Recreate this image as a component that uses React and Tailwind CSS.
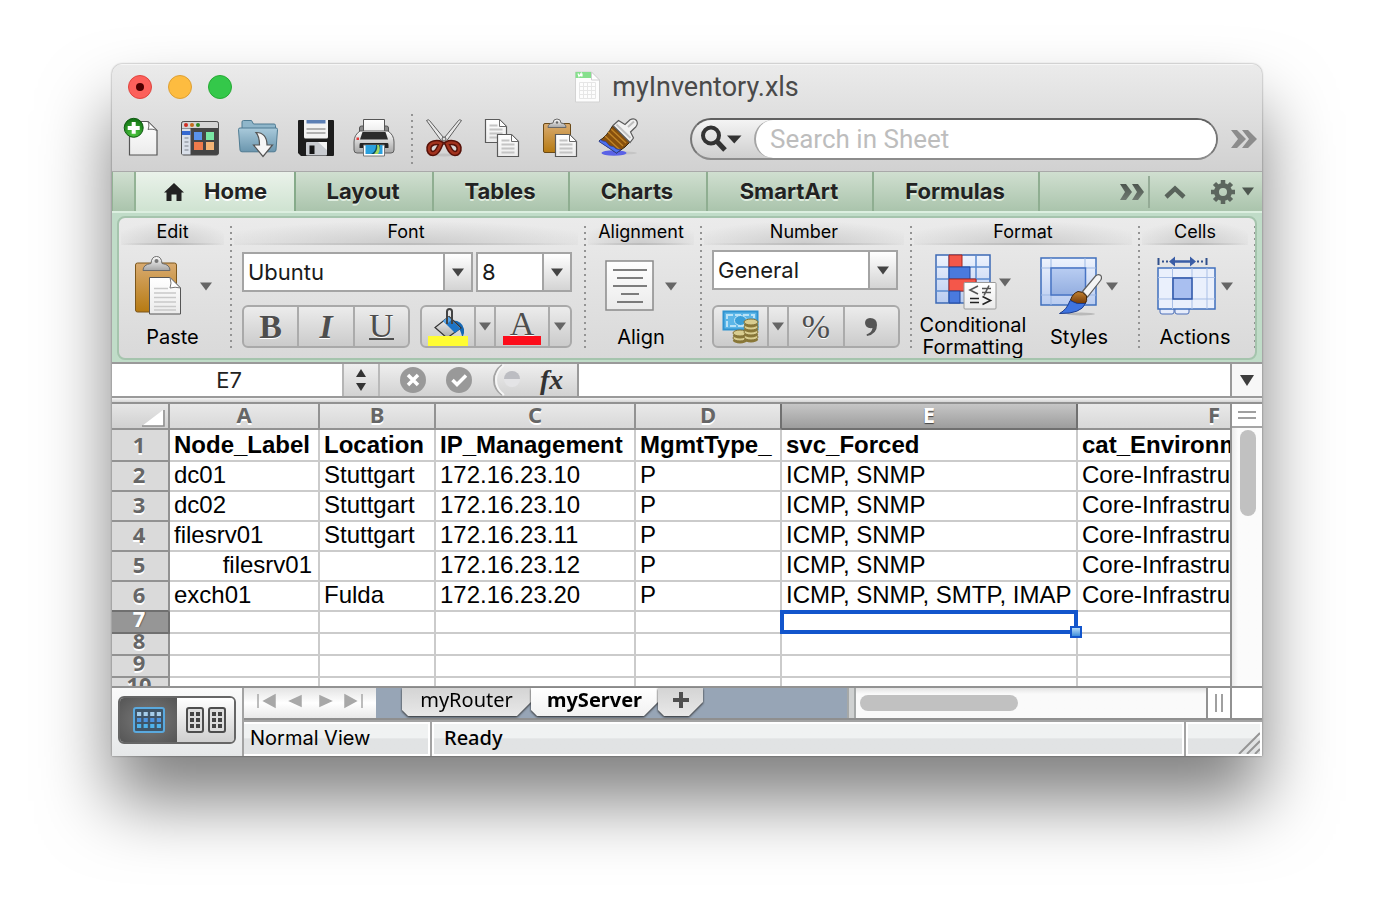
import React from "react";

/* ---------- small shared pieces ---------- */

function Caret({ className = "text-[#666]" }) {
  return (
    <svg width="12" height="9" viewBox="0 0 12 9" className={"shrink-0 " + className} aria-hidden="true">
      <path d="M0 .5h12L6 8.5z" fill="currentColor" />
    </svg>
  );
}

function Dots({ className = "" }) {
  return (
    <div
      className={
        "w-[2px] shrink-0 bg-[repeating-linear-gradient(to_bottom,#949494_0_2px,transparent_2px_6px)] " + className
      }
    />
  );
}

/* A sheet of paper with a folded corner and text lines */
function Sheet({ x, y, w, h, fold = 7, lines = 4, step = 4, top = 9 }) {
  return (
    <g>
      <path
        d={`M${x} ${y}h${w - fold}l${fold} ${fold}v${h - fold}h${-w}z`}
        fill="url(#paper)"
        stroke="#5a5a5a"
        strokeWidth="1.2"
      />
      <path d={`M${x + w - fold} ${y}v${fold}h${fold}z`} fill="#fff" stroke="#6b6b6b" strokeWidth="1" />
      {Array.from({ length: lines }, (_, i) => (
        <path
          key={i}
          d={`M${x + 4} ${y + top + i * step}h${i === 0 && top < fold + 3 ? w - fold - 6 : w - 8}`}
          stroke="#c4c4c4"
          strokeWidth="1.8"
        />
      ))}
    </g>
  );
}

function SharedGradients() {
  return (
    <svg width="0" height="0" className="absolute" aria-hidden="true">
      <defs>
        <linearGradient id="paper" x1="0" y1="0" x2="0" y2="1">
          <stop offset="0" stopColor="#fff" />
          <stop offset="1" stopColor="#ebebeb" />
        </linearGradient>
        <linearGradient id="board" x1="0" y1="0" x2="0" y2="1">
          <stop offset="0" stopColor="#d9ab70" />
          <stop offset="1" stopColor="#b67a12" />
        </linearGradient>
        <linearGradient id="metal" x1="0" y1="0" x2="0" y2="1">
          <stop offset="0" stopColor="#fdfdfd" />
          <stop offset="1" stopColor="#a5a5a5" />
        </linearGradient>
        <linearGradient id="folder" x1="0" y1="0" x2="0" y2="1">
          <stop offset="0" stopColor="#a9cadb" />
          <stop offset="1" stopColor="#6b96ae" />
        </linearGradient>
        <linearGradient id="blueGrid" x1="0" y1="0" x2="0" y2="1">
          <stop offset="0" stopColor="#eef3fd" />
          <stop offset="1" stopColor="#b9ccf0" />
        </linearGradient>
        <linearGradient id="blueCell" x1="0" y1="0" x2="0" y2="1">
          <stop offset="0" stopColor="#b9cdf2" />
          <stop offset="1" stopColor="#93aee0" />
        </linearGradient>
        <linearGradient id="bristle" x1="0" y1="0" x2="0" y2="1">
          <stop offset="0" stopColor="#c4822f" />
          <stop offset="1" stopColor="#6f3606" />
        </linearGradient>
        <radialGradient id="green" cx=".5" cy=".8" r=".8">
          <stop offset="0" stopColor="#4ec940" />
          <stop offset="1" stopColor="#0f6d12" />
        </radialGradient>
        <linearGradient id="glyph" x1="0" y1="0" x2="0" y2="1">
          <stop offset="0" stopColor="#4d564f" />
          <stop offset="1" stopColor="#707b72" />
        </linearGradient>
      </defs>
    </svg>
  );
}

/* ---------- toolbar icons (44 x 44) ---------- */

function NewIcon() {
  return (
    <>
      <path d="M9.5 4.5H28l9 9V38H9.5z" fill="url(#paper)" stroke="#555" strokeWidth="1.2" />
      <path d="M28 4.5c1.5 3 .8 6.500 0 8 2-.6 6-.5 9 1z" fill="#fff" stroke="#666" strokeWidth="1" />
      <circle cx="13.700" cy="10.800" r="9.500" fill="url(#green)" stroke="#0d5a10" />
      <path d="M11.700 5h4v3.900h4v4h-4v3.900h-4v-3.900h-4v-4h4z" fill="#fff" />
    </>
  );
}

function GalleryIcon() {
  return (
    <>
      <rect x="3.500" y="4.500" width="37" height="33.500" rx="2" fill="#454545" stroke="#4d4d4d" />
      <path d="M4 11V6.500Q4 5 5.500 5h33Q40 5 40 6.500V11z" fill="#d4d4d4" />
      <circle cx="8" cy="8" r="2" fill="#d02c22" />
      <circle cx="14" cy="8" r="2" fill="#c56b1b" />
      <circle cx="20" cy="8" r="2" fill="#2e8a24" />
      <path d="M4 11.500h8.500V37.500H4z" fill="#d9dfe9" />
      <path d="M4 14h8.500v4H4z" fill="#3468d0" />
      <path d="M6.500 21h4M6.500 25h4M6.500 29h4M6.500 33h4" stroke="#9aa1ab" strokeWidth="1.500" />
      <rect x="16" y="15" width="8" height="8" fill="#5b93ea" />
      <rect x="28" y="15" width="8" height="8" fill="#79e6a4" />
      <rect x="16" y="25" width="9" height="8" fill="#ee7a4b" />
      <rect x="28" y="25" width="8" height="8" fill="#f3b476" />
    </>
  );
}

function FolderIcon() {
  return (
    <>
      <path d="M6 14V5q0-1.500 1.500-1.500h8L17.500 7H38q1.500 0 1.500 1.500V14z" fill="#8fb6ca" stroke="#4f7b92" />
      <path d="M2.500 12.500q0-1.500 1.500-1.500h36q1.500 0 1.500 1.500L40 33q-.2 1.800-2 1.800H6q-1.800 0-2-1.800z" fill="url(#folder)" stroke="#4f7b92" />
      <path d="M20 15.500c7-.2 11 4.500 11 12.500h5.500L27 39.500 17.500 28h6c0-5.500-.8-9.500-3.500-12.500z" fill="#f5f5f5" stroke="#555" strokeWidth="1.200" />
    </>
  );
}

function SaveIcon() {
  return (
    <>
      <path d="M5 3h34q1 0 1 1v34q0 1-1 1H7l-3-3V4q0-1 1-1z" fill="#1d1d1d" />
      <path d="M10 3h24v17q0 1.500-1.500 1.500h-21Q10 21.500 10 20z" fill="#f2f2f2" />
      <path d="M12.500 3h19v3.500h-19z" fill="#5c7fb4" />
      <path d="M12.500 12h19M12.500 16h19" stroke="#9a9a9a" strokeWidth="1.500" />
      <rect x="12" y="25" width="21" height="13.500" rx="1" fill="#c9ccd1" />
      <path d="M24 25h9v8z" fill="#f3f3f3" />
      <rect x="15.500" y="28.500" width="5" height="8.500" fill="#161616" />
    </>
  );
}

function PrintIcon() {
  return (
    <>
      <rect x="7.500" y="9" width="29" height="12" rx="2" fill="#8b8b8b" stroke="#555" />
      <path d="M11.500 2.500h21V16h-21z" fill="url(#paper)" stroke="#555" />
      <path d="M8 14h28q6 4 6 11v8q0 3-3 3H5q-3 0-3-3v-8q0-7 6-11z" fill="url(#metal)" stroke="#5e5e5e" />
      <path d="M10.500 15h23l2.500 7.500H8z" fill="#2c2c2c" />
      <path d="M8.500 26h27q1 0 1 2v3h-29v-3q0-2 1-2z" fill="#242424" />
      <rect x="4.500" y="20.500" width="2.500" height="2.500" fill="#e23b3b" />
      <path d="M11.500 28h21v11h-21z" fill="#fff" stroke="#777" />
      <path d="M13.500 28h17v9h-17z" fill="#2ba0dd" />
      <path d="M19 37c4-2 5-5 5-9h4c0 5-2 8-5 9z" fill="#0b5064" />
      <path d="M25 28c1 4-1 7-3 9h4c2-3 2-6 1-9z" fill="#a4d65e" />
    </>
  );
}

function CutIcon() {
  return (
    <>
      <ellipse cx="22" cy="38" rx="15" ry="1.500" fill="#c2c2c2" />
      <path d="M4.500 3.500q2-1.500 3 0L26 26l-4 1.500z" fill="#e8e8e8" stroke="#5d5d5d" />
      <path d="M39.500 3.500q-2-1.500-3 0L18 26l4 1.500z" fill="#e8e8e8" stroke="#5d5d5d" />
      <circle cx="22" cy="22" r="2" fill="#ddd" stroke="#555" />
      <g fill="none" stroke="#561108" strokeWidth="5.500">
        <path d="M19 26.500c-4-2-11-1-12 4-.5 4 1.500 6 4 6 4-.2 6-5 8-10z" />
        <path d="M25 26.500c4-2 11-1 12 4 .5 4-1.500 6-4 6-4-.2-6-5-8-10z" />
      </g>
      <g fill="none" stroke="#a2331e" strokeWidth="2.500">
        <path d="M19 26.500c-4-2-11-1-12 4-.5 4 1.500 6 4 6 4-.2 6-5 8-10z" />
        <path d="M25 26.500c4-2 11-1 12 4 .5 4-1.500 6-4 6-4-.2-6-5-8-10z" />
      </g>
    </>
  );
}

function CopyIcon() {
  return (
    <>
      <Sheet x={5.5} y={2.500} w={21} h={23} top={6} lines={4} />
      <Sheet x={17.500} y={17.500} w={21} h={22} top={6} lines={4} />
    </>
  );
}

function PasteIcon() {
  return (
    <>
      <rect x="5.500" y="6.500" width="27" height="29" rx="1.500" fill="url(#board)" stroke="#6b4a17" />
      <path d="M10 10.500q0-4 5-4.500 0-4 4-4t4 4q5 .5 5 4.500z" fill="url(#metal)" stroke="#6a6a6a" />
      <circle cx="19" cy="5.500" r="1.200" fill="#666" />
      <Sheet x={17.500} y={17.500} w={21} h={22} top={6} lines={4} />
    </>
  );
}

function BrushIcon() {
  return (
    <>
      <ellipse cx="30" cy="36" rx="11" ry="1.500" fill="#bdbdbd" opacity=".7" />
      <ellipse cx="18" cy="36" rx="12.500" ry="2.800" fill="#5a62e6" />
      <path d="M16.500 9 34 25l-5 5-8.500 6L3 24q8-5 13.500-15z" fill="#87500e" stroke="#33240e" />
      <path d="M12 15l15 14M9 19l15 14M15 12l15 14" stroke="#c08426" strokeWidth="1.400" />
      <path d="M4.500 22.500c3 3 4 0 7 4s5 2 7 4 4 2 6.500 2L20.500 36 3 24.500z" fill="#4d70ee" stroke="#2c3f94" strokeWidth=".8" />
      <path
        d="M17 8.500 22.500 3.500 29 7.500 34 2.800q4-2.300 6.500.7 2 3.500-.8 6.500L34.500 15l3 6-3.500 4.500z"
        fill="#f1f1f1"
        stroke="#5c5c5c"
        strokeWidth="1.200"
      />
      <path d="M20.500 7.500 34.500 21" stroke="#c3c3c3" strokeWidth="2" />
      <path d="M32 10l6-5.500" stroke="#bdbdbd" strokeWidth="2" />
    </>
  );
}

const fileTools = [
  ["New workbook", NewIcon],
  ["Template gallery", GalleryIcon],
  ["Open", FolderIcon],
  ["Save", SaveIcon],
  ["Print", PrintIcon],
];
const editTools = [
  ["Cut", CutIcon],
  ["Copy", CopyIcon],
  ["Paste", PasteIcon],
  ["Format painter", BrushIcon],
];

function ToolButton({ label, Icon }) {
  return (
    <button type="button" aria-label={label} className="flex w-[58px] shrink-0 justify-center">
      <svg width="44" height="44" viewBox="0 0 44 44" aria-hidden="true">
        <Icon />
      </svg>
    </button>
  );
}

/* ---------- window chrome ---------- */

function TitleBar() {
  return (
    <div className="flex h-11 items-center px-4">
      <div className="flex flex-1 gap-4">
        <button type="button" aria-label="Close" className="flex size-6 items-center justify-center rounded-full border border-[#e0443e] bg-[#fc605b]">
          <span className="size-2 rounded-full bg-[#4d0000]" />
        </button>
        <button type="button" aria-label="Minimize" className="size-6 rounded-full border border-[#dea034] bg-[#fdbc40]" />
        <button type="button" aria-label="Zoom" className="size-6 rounded-full border border-[#27aa35] bg-[#34c84a]" />
      </div>
      <div className="flex items-center gap-3">
        <svg width="25" height="32" viewBox="0 0 25 32" aria-hidden="true">
          <path d="M.5 1h16l8 8v22H.5z" fill="#fdfdfd" stroke="#d3d3d3" />
          <path d="M.5 1h16l4 6H.5z" fill="#86e08d" />
          <path d="M16.500 1v8h8z" fill="#fff" stroke="#cfcfcf" />
          <path d="M3 2.500l1 3 2-3v3M7 2.500v3" stroke="#fff" strokeWidth="1.200" fill="none" />
          <path d="M4.500 11.500h16v16h-16zM4.500 15.500h16M4.500 19.500h16M4.500 23.500h16M8.500 11.500v16M12.500 11.500v16M16.500 11.500v16" stroke="#e6e6e6" fill="none" />
        </svg>
        <h1 className="font-['Roboto',sans-serif] text-[27px] leading-8 text-[#4a4a4a]">myInventory.xls</h1>
      </div>
      <div className="flex-1" />
    </div>
  );
}

function Toolbar() {
  return (
    <div className="flex h-[62px] items-center pr-1 pb-[2px] pl-px">
      {fileTools.map(([label, Icon]) => (
        <ToolButton key={label} label={label} Icon={Icon} />
      ))}
      <div className="flex w-3 shrink-0 justify-end pr-0.5">
        <Dots className="h-[50px]" />
      </div>
      {editTools.map(([label, Icon]) => (
        <ToolButton key={label} label={label} Icon={Icon} />
      ))}
      <label className="ml-[43px] flex h-[42px] min-w-0 flex-1 items-center rounded-full border-2 border-t-[#606060] border-r-[#777] border-b-[#8c8c8c] border-l-[#777] bg-linear-to-b from-[#f4f4f4] to-[#cfcfcf] pl-2">
        <svg width="44" height="30" viewBox="0 0 44 30" className="mr-2.5 shrink-0" aria-hidden="true">
          <circle cx="11" cy="11.500" r="8" fill="none" stroke="#333" strokeWidth="4" />
          <path d="M17 17.500l8 8.500" stroke="#333" strokeWidth="5" />
          <path d="M27 11.500h14.500l-7.250 8z" fill="#333" />
        </svg>
        <span className="sr-only">Search in Sheet</span>
        <input
          type="search"
          placeholder="Search in Sheet"
          className="h-full w-full min-w-0 rounded-full border-l-2 border-[#a5a5a5] bg-white pl-3.5 font-['Roboto',sans-serif] text-[26px] placeholder:text-[#bdbdbd] focus:outline-none"
        />
      </label>
      <button type="button" aria-label="More tools" className="ml-3 flex w-7 shrink-0 justify-center text-[#8c8c8c]">
        <svg width="26" height="18" viewBox="0 0 26 18" aria-hidden="true">
          <path d="M0 0h6l9 9-9 9H0l7-9zM11 0h6l9 9-9 9h-6l7-9z" fill="currentColor" />
        </svg>
      </button>
    </div>
  );
}

const tabs = [
  ["Layout", "w-[138px]"],
  ["Tables", "w-[136px]"],
  ["Charts", "w-[138px]"],
  ["SmartArt", "w-[166px]"],
  ["Formulas", "w-[166px]"],
];

function RibbonTabs() {
  return (
    <div className="flex h-10 border-t border-[#a9a9a9] bg-linear-to-b from-[#d0dfd0] to-[#aac4ac] text-[22px] font-bold text-[#222]">
      <div className="w-6 shrink-0 border-r-2 border-l border-[#93b395]" />
      <button type="button" className="flex w-[160px] shrink-0 items-center border-r-2 border-[#86ab8a] bg-linear-to-b from-[#eaf2ea] to-[#cfe3d1] pl-7 [text-shadow:0_2px_0_#fff]">
        <svg width="20" height="18" viewBox="0 0 20 18" className="mr-5" aria-hidden="true">
          <path d="M10 0l10 9.500h-2.500V18h-5v-6.500h-5V18h-5V9.500H0z" fill="#222" />
        </svg>
        Home
      </button>
      {tabs.map(([name, width]) => (
        <button key={name} type="button" className={width + " shrink-0 border-r-2 border-[#8fae91] pr-0.5 [text-shadow:0_2px_0_#e0eee0]"}>
          {name}
        </button>
      ))}
      <div className="flex flex-1 items-center justify-end gap-1 pr-2">
        <button type="button" aria-label="More tabs">
          <svg width="24" height="18" viewBox="0 0 24 18" aria-hidden="true">
            <path d="M0 1h6l6 8-6 8H0l5-8zM12 1h6l6 8-6 8h-6l5-8z" fill="url(#glyph)" />
          </svg>
        </button>
        <div className="h-8 w-[2px] bg-[#94ab96]" />
        <button type="button" aria-label="Collapse ribbon" className="mr-5 ml-2.5">
          <svg width="22" height="16" viewBox="0 0 22 16" aria-hidden="true">
            <path d="M2 13l9-8.500 9 8.500" fill="none" stroke="#59635b" strokeWidth="4.500" />
          </svg>
        </button>
        <button type="button" aria-label="Ribbon settings" className="flex items-center gap-1.5">
          <svg width="26" height="26" viewBox="-13 -13 26 26" aria-hidden="true">
            <circle r="6.500" fill="none" stroke="#5c665e" strokeWidth="5" />
            <g stroke="#5c665e" strokeWidth="4.500">
              <path d="M0-12V-8M0 12V8M-12 0h4M12 0H8M-8.500-8.500l3 3M8.500 8.500l-3-3M-8.500 8.500l3-3M8.500-8.500l-3 3" />
            </g>
          </svg>
          <Caret className="text-[#4d564f]" />
        </button>
      </div>
    </div>
  );
}

/* ---------- ribbon ---------- */

function Group({ title, width, children }) {
  return (
    <>
      <section className={width + " flex shrink-0 flex-col pr-1.5 pl-0.5"}>
        <div className="bg-[radial-gradient(ellipse_60%_90%_at_50%_100%,#cbcbcb,transparent)]">
          <h2 className="h-[25px] text-center text-[18px] leading-[27px] text-black">{title}</h2>
          <div className="h-[2px] bg-linear-to-r from-transparent via-[#bdbdbd] to-transparent" />
        </div>
        {children}
      </section>
      <Dots className="my-2" />
    </>
  );
}

function BigButton({ label, gap, tall, children, className = "" }) {
  return (
    <button type="button" className={"flex flex-col items-center pt-2 text-[20px] text-black " + className}>
      <span className={(tall ? "h-[61px] " : "h-[72px] ") + "flex items-start"}>
        <span className={gap + (tall ? " h-[58px]" : " h-[66px]") + " flex items-center"}>
          {children}
          <Caret />
        </span>
      </span>
      <span className={tall ? "leading-[22px]" : "leading-6"}>{label}</span>
    </button>
  );
}

function Combo({ label, options, width }) {
  return (
    <label className={width + " relative h-10 shrink-0"}>
      <span className="sr-only">{label}</span>
      <select className="h-full w-full appearance-none border-2 border-[#a4a4a4] bg-white pl-1 text-[22px] leading-8 text-[#1a1a1a]">
        {options.map((o) => (
          <option key={o}>{o}</option>
        ))}
      </select>
      <span className="pointer-events-none absolute inset-y-0 right-0 flex w-[30px] items-center justify-center border-2 border-[#a4a4a4] bg-linear-to-b from-white to-[#d4d4d4]">
        <Caret className="text-[#444]" />
      </span>
    </label>
  );
}

const segBox =
  "flex h-[43px] shrink-0 overflow-hidden rounded-[6px] border-2 border-[#a9a9a9] bg-linear-to-b from-[#ececec] to-[#cbcbcb] divide-x-2 divide-[#ababab] font-['Liberation_Serif',serif] text-[34px] leading-none text-[#4e4e4e]";
const seg = "flex flex-1 items-center justify-center [text-shadow:0_1px_0_#fff]";
const segCaret = "flex w-5 shrink-0 items-center justify-center";

function ClipboardArt() {
  return (
    <svg width="50" height="62" viewBox="0 0 50 62" aria-hidden="true">
      <rect x="1.500" y="8" width="41" height="49" rx="2" fill="url(#board)" stroke="#7c571c" />
      <path d="M9 15.500q0-6 8-7 .5-7 5.500-7t5.500 7q8 1 8 7z" fill="url(#metal)" stroke="#6a6a6a" />
      <circle cx="22.500" cy="6" r="2" fill="#777" />
      <path d="M15.500 22.500H36l10.500 10.500v26h-31z" fill="url(#paper)" stroke="#555" />
      <path d="M36 22.500q2 6 0 10.500 5-1.500 10.500 0z" fill="#fff" stroke="#777" />
      <path d="M20 33.500h14M20 38h22M20 42.500h22M20 47h22M20 51.500h22M20 55h22" stroke="#c9c9c9" strokeWidth="1.600" />
    </svg>
  );
}

function BucketArt() {
  return (
    <svg width="40" height="38" viewBox="0 0 40 38" aria-hidden="true">
      <path d="M25 12.500q9 0 11 8.500.8 4-1.500 8.500-1.500-5-3-8.500T25 15z" fill="#1668b4" />
      <path d="M21 8.500 33 20 19 30 7 19.500z" fill="url(#metal)" stroke="#333" strokeWidth="1.200" />
      <path d="M15 13 27 25l5.500-4.500L20.500 9z" fill="#1d74c6" />
      <path d="M15 13l5.500-4.200 3 3-5 4.700z" fill="#58a6ea" />
      <path d="M19 16V3.500q0-2.500 2.500-2.500T24 3.500V16" fill="none" stroke="#444" strokeWidth="2" />
      <path d="M0 28h40v10H0z" fill="#fffc33" />
    </svg>
  );
}

function MoneyArt() {
  const coins = [
    [29, 12], [29, 17], [29, 22], [29, 27], [18, 23], [18, 28],
  ].reverse();
  return (
    <svg width="38" height="34" viewBox="0 0 38 34" aria-hidden="true">
      <rect x="1.500" y="1.500" width="34" height="18" fill="#5cb6e8" stroke="#2f93d0" strokeWidth="2" />
      <rect x="5" y="5" width="27" height="11" fill="none" stroke="#b9e2f7" strokeDasharray="6 2" strokeWidth="2" />
      <ellipse cx="18.500" cy="10.500" rx="6" ry="5" fill="#3b9fd8" stroke="#c8e9f9" />
      {coins.map(([x, y]) => (
        <g key={x + "-" + y}>
          <ellipse cx={x} cy={y + 2.500} rx="7" ry="3" fill="#8a7838" />
          <ellipse cx={x} cy={y} rx="7" ry="3" fill="#d9cd90" stroke="#84733a" />
        </g>
      ))}
    </svg>
  );
}

function AlignArt() {
  return (
    <svg width="50" height="52" viewBox="0 0 50 52" aria-hidden="true">
      <rect x="1" y="1" width="47" height="49" fill="url(#paper)" stroke="#8a8a8a" strokeWidth="1.500" />
      <path d="M8 10h34M12 18h26M8 26h34M16 34h18M12 42h26" stroke="#555" strokeWidth="1.600" />
    </svg>
  );
}

function ConditionalArt() {
  return (
    <svg width="62" height="56" viewBox="0 0 62 56" aria-hidden="true">
      <rect x="1" y="1" width="54" height="48" fill="url(#blueGrid)" stroke="#3d69b5" strokeWidth="1.500" />
      <path d="M1 13h54M1 25h54M1 37h54M14 1v48M41 1v48" stroke="#5b8ad0" strokeWidth="1.500" />
      <path d="M14 1h13v12H14z" fill="#f4574a" stroke="#a8281e" />
      <path d="M14 13h21v12H14z" fill="#4a7ade" stroke="#1f479e" />
      <path d="M14 25h27v12H14z" fill="#f4574a" stroke="#a8281e" />
      <path d="M14 37h11v12H14z" fill="#4a7ade" stroke="#1f479e" />
      <rect x="29" y="28.500" width="32" height="26.500" rx="1" fill="url(#paper)" stroke="#9a9a9a" />
      <g fill="none" stroke="#222" strokeWidth="1.600">
        <path d="M43 32l-8 4 8 4M47 34.500h9M47 38.500h9M54 31.500l-5 10" stroke="#555" />
        <path d="M35 44.500h9M35 48.500h9M47.500 42.500l8 4-8 4" />
      </g>
    </svg>
  );
}

function StylesArt() {
  return (
    <svg width="62" height="60" viewBox="0 0 62 60" aria-hidden="true">
      <rect x="1" y="2" width="55" height="47" fill="url(#blueGrid)" stroke="#3f6fbd" strokeWidth="1.500" />
      <path d="M1 12h55M1 39h55M11 2v47M45 2v47" stroke="#9db8e4" />
      <rect x="11" y="12" width="34.500" height="27" fill="url(#blueCell)" stroke="#4874c4" strokeWidth="1.500" />
      <ellipse cx="41" cy="58" rx="14" ry="1.500" fill="#b9b9b9" />
      <path d="M42.500 35.500 55.500 20q2.500-2.500 5-.8 2 2.300 0 5.300L47.500 41z" fill="#f4f4f4" stroke="#5e5e5e" strokeWidth="1.200" />
      <path d="M42.500 35.500l5 5.500-2 2-5.500-6z" fill="#9c9c9c" />
      <path d="M30.500 44q2-6.500 7.500-8.500 5-.5 8.500 4.500 1 5-1.500 8-8 1.500-14.500-4z" fill="url(#bristle)" stroke="#40240a" />
      <path d="M30 44.500q7 4.500 15.500 3-4.500 10.500-26 10 7.500-4 10.500-13z" fill="#3f74e0" stroke="#1c3c8c" />
    </svg>
  );
}

function ActionsArt() {
  return (
    <svg width="60" height="60" viewBox="0 0 60 60" aria-hidden="true">
      <path d="M1.500 2v7M49.500 2v7" stroke="#31508c" strokeWidth="2" />
      <path d="M5 5.500h8M40 5.500h7" stroke="#31508c" strokeWidth="2" strokeDasharray="2 2" />
      <path d="M12 5.500l6-5v3.800h15V.5l6 5-6 5V6.700H18v3.800z" fill="#3a5da6" />
      <path d="M3 52.500h14v3.500q0 2-2 2H5q-2 0-2-2zM18 52.500h14v3.500q0 2-2 2H20q-2 0-2-2z" fill="#e6ecfb" stroke="#4c6fb8" />
      <rect x="1" y="12" width="57" height="41" fill="#eaf0fc" stroke="#3f6fbd" strokeWidth="1.500" />
      <path d="M1 21.500h57M1 43h57M15.500 12v41M35 12v41M50 12v41" stroke="#a9bfe6" />
      <rect x="16" y="22" width="19" height="21" fill="#a9bff0" stroke="#2d55a8" strokeWidth="1.500" />
    </svg>
  );
}

function Ribbon() {
  return (
    <div className="border-t-2 border-[#dcefe0] bg-[#c0dcc8] px-[5px] pt-[3px] pb-[2px]">
      <div className="flex h-[144px] overflow-hidden rounded-[8px] border-2 border-[#a5c4ad] bg-linear-to-b from-[#ebebeb] to-[#d9d9d9]">
        <Group title="Edit" width="w-[111px]">
          <BigButton label="Paste" gap="gap-4">
            <ClipboardArt />
          </BigButton>
        </Group>
        <Group title="Font" width="w-[352px]">
          <div className="flex flex-col gap-[13px] pt-[7px] pl-2">
            <div className="flex gap-[3px]">
              <Combo label="Font name" options={["Ubuntu", "Arial", "Calibri"]} width="w-[231px]" />
              <Combo label="Font size" options={["8", "10", "12"]} width="w-[96px]" />
            </div>
            <div className="flex gap-2.5">
              <div className={segBox + " w-[168px]"}>
                <button type="button" aria-label="Bold" className={seg + " font-bold"}>B</button>
                <button type="button" aria-label="Italic" className={seg + " font-bold italic"}>I</button>
                <button type="button" aria-label="Underline" className={seg}>
                  <span className="border-b-2 border-[#4e4e4e] leading-[25px]">U</span>
                </button>
              </div>
              <div className={segBox + " w-[152px]"}>
                <button type="button" aria-label="Fill color" className={seg}><BucketArt /></button>
                <button type="button" aria-label="Fill color options" className={segCaret}><Caret /></button>
                <button type="button" aria-label="Font color" className={seg + " flex-col"}>
                  <span className="h-[27px] leading-[30px]">A</span>
                  <span className="h-[9px] w-[38px] bg-[#fc0d1b]" />
                </button>
                <button type="button" aria-label="Font color options" className={segCaret}><Caret /></button>
              </div>
            </div>
          </div>
        </Group>
        <Group title="Alignment" width="w-[114px]">
          <BigButton label="Align" gap="gap-2.5">
            <AlignArt />
          </BigButton>
        </Group>
        <Group title="Number" width="w-[208px]">
          <div className="flex flex-col gap-[15px] pt-[5px] pl-2">
            <Combo label="Number format" options={["General", "Number", "Currency"]} width="w-[186px]" />
            <div className={segBox + " w-[188px]"}>
              <button type="button" aria-label="Currency" className={seg}><MoneyArt /></button>
              <button type="button" aria-label="Currency options" className={segCaret}><Caret /></button>
              <button type="button" aria-label="Percent" className={seg}>%</button>
              <button type="button" aria-label="Comma style" className={seg}>
                <svg width="14" height="20" viewBox="0 0 14 20" aria-hidden="true">
                  <path d="M6 1q7 0 7 7 0 9-10 11l-.5-1.500Q8 15.500 8.500 11 1.500 12 1 6 1 1.500 6 1z" fill="#555" />
                </svg>
              </button>
            </div>
          </div>
        </Group>
        <Group title="Format" width="w-[226px]">
          <div className="flex gap-2 pl-[3px]">
            <BigButton
              label={<>Conditional<br />Formatting</>}
              gap="gap-0.5"
              tall
              className="w-[112px]"
            >
              <ConditionalArt />
            </BigButton>
            <BigButton label="Styles" gap="gap-1" className="w-[84px]">
              <StylesArt />
            </BigButton>
          </div>
        </Group>
        <Group title="Cells" width="w-[114px]">
          <BigButton label="Actions" gap="gap-1">
            <ActionsArt />
          </BigButton>
        </Group>
      </div>
    </div>
  );
}

/* ---------- formula bar ---------- */

function FormulaBar() {
  return (
    <div className="flex h-9 border-y-2 border-[#9a9a9a] bg-linear-to-b from-[#efefef] to-[#d2d2d2]">
      <input
        aria-label="Name box"
        defaultValue="E7"
        className="w-[232px] shrink-0 border-r-2 border-[#b5b5b5] bg-white pl-1 text-center text-[22px] text-[#222]"
      />
      <button type="button" aria-label="Name list" className="flex w-9 shrink-0 items-center justify-center border-r-2 border-[#b9b9b9]">
        <svg width="10" height="22" viewBox="0 0 10 22" aria-hidden="true">
          <path d="M5 0l5 8H0zM5 22l5-8H0z" fill="#333" />
        </svg>
      </button>
      <div className="flex w-[197px] shrink-0 items-center gap-5 pl-5">
        <button type="button" aria-label="Cancel">
          <svg width="26" height="26" viewBox="0 0 26 26" aria-hidden="true">
            <circle cx="13" cy="13" r="13" fill="#999" />
            <path d="M8 8l10 10M18 8L8 18" stroke="#fff" strokeWidth="3.500" />
          </svg>
        </button>
        <button type="button" aria-label="Enter">
          <svg width="26" height="26" viewBox="0 0 26 26" aria-hidden="true">
            <circle cx="13" cy="13" r="13" fill="#999" />
            <path d="M6.500 13l4.500 4.500 9-9" fill="none" stroke="#fff" strokeWidth="3.500" />
          </svg>
        </button>
        <svg width="28" height="32" viewBox="0 0 28 32" aria-hidden="true">
          <path d="M10 1Q2 7 2 16t8 15" fill="none" stroke="#a5a5a5" strokeWidth="2" />
          <path d="M12 1Q4 7 4 16t8 15" fill="none" stroke="#f6f6f6" strokeWidth="2" />
          <circle cx="20" cy="15" r="8" fill="#e4e4e6" />
          <path d="M12 15a8 8 0 0 1 16 0z" fill="#bcbdc2" />
        </svg>
        <button type="button" aria-label="Insert function" className="font-['Liberation_Serif',serif] text-[28px] leading-7 font-bold text-[#333] italic">
          fx
        </button>
      </div>
      <input aria-label="Formula" className="min-w-0 flex-1 border-x-2 border-[#9a9a9a] bg-white px-2 text-[22px]" />
      <button type="button" aria-label="Expand formula bar" className="flex w-[30px] shrink-0 items-center justify-center bg-[#f7f7f7]">
        <svg width="14" height="11" viewBox="0 0 14 11" aria-hidden="true">
          <path d="M0 0h14L7 11z" fill="#3d3d3d" />
        </svg>
      </button>
    </div>
  );
}

/* ---------- grid ---------- */

const columns = [
  ["A", "w-[150px]"],
  ["B", "w-[116px]"],
  ["C", "w-[200px]"],
  ["D", "w-[146px]"],
  ["E", "w-[296px]"],
  ["F", "w-[274px]"],
];

const rows = [
  ["Node_Label", "Location", "IP_Management", "MgmtType_", "svc_Forced", "cat_Environment"],
  ["dc01", "Stuttgart", "172.16.23.10", "P", "ICMP, SNMP", "Core-Infrastructure"],
  ["dc02", "Stuttgart", "172.16.23.10", "P", "ICMP, SNMP", "Core-Infrastructure"],
  ["filesrv01", "Stuttgart", "172.16.23.11", "P", "ICMP, SNMP", "Core-Infrastructure"],
  ["filesrv01", "", "172.16.23.12", "P", "ICMP, SNMP", "Core-Infrastructure"],
  ["exch01", "Fulda", "172.16.23.20", "P", "ICMP, SNMP, SMTP, IMAP", "Core-Infrastructure"],
  [], [], [], [],
];

function rowHeight(r) {
  if (r === 0) return "h-8";
  return r < 6 ? "h-[30px]" : "h-[22px]";
}

function Grid() {
  return (
    <div className="min-w-0 flex-1 overflow-hidden border-r-2 border-[#929292] bg-white">
      <table className="w-[1240px] min-w-full table-fixed border-separate border-spacing-0 font-['Liberation_Sans',Arial,sans-serif] text-[24px] text-black">
        <thead className="font-['Noto_Sans',sans-serif] text-[22px] text-[#666]">
          <tr className="h-[26px]">
            <th scope="col" aria-label="Select all" className="w-[58px] border-r-2 border-b-2 border-[#929292] bg-linear-to-b from-[#e6e6e6] to-[#d0d0d0] p-0">
              <svg width="24" height="18" viewBox="0 0 24 18" className="mt-1 mr-0.5 ml-auto" aria-hidden="true">
                <path d="M21 1v16H0z" fill="#fff" />
                <path d="M22 1v16H0" fill="none" stroke="#8d8d8d" strokeWidth="1.500" />
              </svg>
            </th>
            {columns.map(([name, width]) => (
              <th
                key={name}
                scope="col"
                className={
                  width +
                  " border-r-2 border-b-2 p-0 align-top leading-5 font-bold " +
                  (name === "E"
                    ? "border-[#707070] bg-linear-to-b from-[#c6c6c6] to-[#9d9d9d] text-white [text-shadow:0_1px_1px_#444]"
                    : "bg-linear-to-b from-[#e9e9e9] to-[#d8d8d8] [text-shadow:0_2px_0_#fff] " +
                      (name === "D" ? "border-[#707070] border-b-[#929292]" : "border-[#929292]"))
                }
              >
                {name}
              </th>
            ))}
          </tr>
        </thead>
        <tbody>
          {rows.map((row, r) => (
            <tr key={r} className={rowHeight(r)}>
              <th
                scope="row"
                className={
                  "border-r-2 border-b-2 p-0 align-top font-['Noto_Sans',sans-serif] text-[22px] font-bold " +
                  (r === 6
                    ? "border-[#707070] bg-[#969696] text-white [text-shadow:1px_0_1px_#555]"
                    : "border-[#929292] bg-[#dadada] text-[#666] [text-shadow:0_2px_0_#fff] " +
                      (r === 5 ? "border-b-[#707070]" : ""))
                }
              >
                <div className={"overflow-hidden pr-0.5 " + (r === 0 ? "h-[30px] leading-7" : r < 6 ? "h-7 leading-6" : "h-5 leading-3")}>
                  {r + 1}
                </div>
              </th>
              {columns.map(([name], c) => (
                <td
                  key={name}
                  className={
                    "relative border-r-2 border-b-2 border-[#cbcbcb] p-0 align-top whitespace-nowrap " +
                    (r === 4 && c === 0 ? "pr-1.5 text-right " : "pl-1 ") +
                    (r === 0 ? "leading-[30px] font-bold" : r < 6 ? "leading-[26px]" : "leading-5")
                  }
                >
                  {row[c]}
                  {r === 6 && name === "E" && (
                    <div className="absolute -inset-0.5 z-10 border-4 border-[#1255cc]">
                      <div className="absolute -right-2 -bottom-2 size-3 border-2 border-[#1255cc] bg-linear-to-b from-[#b4dbf7] to-[#3d8fdb]" />
                    </div>
                  )}
                </td>
              ))}
            </tr>
          ))}
        </tbody>
      </table>
    </div>
  );
}

function VerticalScroll() {
  return (
    <div className="flex w-[30px] shrink-0 flex-col">
      <div className="flex h-6 flex-col items-center justify-center gap-1 border-b-2 border-[#a5a5a5] bg-white">
        <div className="h-[2px] w-[18px] bg-[#a0a0a0]" />
        <div className="h-[2px] w-[18px] bg-[#a0a0a0]" />
      </div>
      <div className="flex-1 bg-linear-to-r from-[#ebebeb] to-[#fbfbfb] to-20% pt-0.5 pl-0.5">
        <div className="mx-auto h-[86px] w-4 rounded-full bg-[#c1c1c1]" />
      </div>
    </div>
  );
}

/* ---------- bottom area ---------- */

function ViewSwitch() {
  return (
    <div className="flex w-[132px] shrink-0 items-center justify-center border-r-2 border-[#a3a3a3] bg-linear-to-b from-[#fafafa] to-[#e6e8e9] pt-2 pb-3">
      <div className="flex h-12 w-[118px] overflow-hidden rounded-[6px] border-2 border-[#666]">
        <button type="button" aria-label="Normal view" className="flex flex-1 items-center justify-center bg-[radial-gradient(#7b7b7b,#555)]">
          <svg width="32" height="26" viewBox="0 0 32 26" aria-hidden="true">
            <rect x="1" y="1" width="30" height="24" rx="2" fill="#3f5568" stroke="#5aa9de" strokeWidth="2" />
            <path d="M4 7h24" stroke="#a5cdea" strokeWidth="4" strokeDasharray="4.200 2.400" />
            <path d="M4 13h24" stroke="#4d94e0" strokeWidth="4" strokeDasharray="4.200 2.400" />
            <path d="M4 19h24" stroke="#4fb2ea" strokeWidth="4" strokeDasharray="4.200 2.400" />
          </svg>
        </button>
        <button type="button" aria-label="Page layout view" className="flex flex-1 items-center justify-center bg-linear-to-b from-white to-[#cfcfcf]">
          <svg width="40" height="26" viewBox="0 0 40 26" aria-hidden="true">
            {[0, 22].map((x) => (
              <g key={x}>
                <rect x={x + 1} y="1" width="16" height="24" rx="2" fill="#ddd" stroke="#4d4d4d" strokeWidth="2" />
                <path d={`M${x + 4} 7h10M${x + 4} 13h10M${x + 4} 19h10`} stroke="#444" strokeWidth="4" strokeDasharray="4 2" />
              </g>
            ))}
          </svg>
        </button>
      </div>
    </div>
  );
}

const navShapes = [
  ["First sheet", "M1 1v14M18 2L7 8l11 6z"],
  ["Previous sheet", "M15 3L4 8l11 5z"],
  ["Next sheet", "M5 3l11 5-11 5z"],
  ["Last sheet", "M1 2l11 6-11 6zM18 1v14"],
];

const tabCut =
  "flex h-full w-full items-center justify-center pb-1 [clip-path:polygon(0_0,100%_0,100%_calc(100%-14px),calc(100%-14px)_100%,6px_100%,0_calc(100%-6px))]";
const tabEdge = "h-[28px] shrink-0 drop-shadow-[0_1px_1px_#222]";

function SheetBar() {
  return (
    <div className="flex h-8 border-b-2 border-[#8f8f8f] bg-[#97a5b6]">
      <div className="flex w-[132px] shrink-0 items-center justify-center gap-2.5 bg-linear-to-b from-[#e4e4e4] via-white to-[#e9e9e9] pb-1">
        {navShapes.map(([label, d]) => (
          <button key={label} type="button" aria-label={label}>
            <svg width="19" height="16" viewBox="0 0 19 16" aria-hidden="true">
              <path d={d} fill="#a8a8a8" stroke="#a8a8a8" strokeWidth="1.500" />
            </svg>
          </button>
        ))}
      </div>
      <div className="flex min-w-0 flex-1 pl-[26px] font-['Noto_Sans',sans-serif] text-[20px] text-black">
        <div className={tabEdge + " w-[129px]"}>
          <button type="button" className={tabCut + " bg-linear-to-b from-[#d4d4d4] to-[#e8e8e8]"}>myRouter</button>
        </div>
        <div className={tabEdge + " w-[127px]"}>
          <button type="button" className={tabCut + " bg-linear-to-b from-white to-[#f1f1f1] font-bold"}>myServer</button>
        </div>
        <div className={tabEdge + " w-[45px]"}>
          <button type="button" aria-label="Add sheet" className={tabCut + " bg-linear-to-b from-[#d4d4d4] to-[#e8e8e8]"}>
            <svg width="16" height="16" viewBox="0 0 16 16" aria-hidden="true">
              <path d="M8 0v16M0 8h16" stroke="#4f4f4f" strokeWidth="4" />
            </svg>
          </button>
        </div>
      </div>
      <div className="w-[9px] shrink-0 border-x-2 border-[#a5a8a8] bg-[#cfd1d1]" />
      <div className="flex w-[350px] shrink-0 items-center bg-linear-to-b from-[#e4e4e4] to-[#fafafa] to-20% pl-1">
        <div className="h-4 w-[158px] rounded-full bg-[#c1c1c1]" />
      </div>
      <div className="flex w-[26px] shrink-0 items-center justify-center gap-1 border-x-2 border-[#929292] bg-white">
        <div className="h-[18px] w-[2px] bg-[#a0a0a0]" />
        <div className="h-[18px] w-[2px] bg-[#a0a0a0]" />
      </div>
      <div className="w-[30px] shrink-0 bg-white" />
    </div>
  );
}

const statusCell = "border-y-2 border-r-2 border-white bg-linear-to-b from-[#f0f2f2] from-45% to-[#e1e3e4] to-50%";

function StatusBar() {
  return (
    <div className="flex h-9 border-t-2 border-[#a3a3a3] text-[20px] leading-7 text-black">
      <div className={statusCell + " w-[186px] shrink-0 pl-1.5"}>Normal View</div>
      <div className="w-[2px] bg-[#a3a3a3]" />
      <div className={statusCell + " min-w-0 flex-1 border-l-2 pl-2.5 font-['Noto_Sans',sans-serif] font-medium"}>Ready</div>
      <div className="w-[2px] bg-[#a3a3a3]" />
      <div className={statusCell + " flex w-[76px] shrink-0 items-end justify-end border-l-2"}>
        <svg width="22" height="22" viewBox="0 0 22 22" aria-hidden="true">
          <path d="M1 22L22 1M9 22L22 9M17 22l5-5" stroke="#959595" strokeWidth="2" />
        </svg>
      </div>
    </div>
  );
}

export default function App() {
  return (
    <div className="min-h-screen bg-white px-28 pt-16 pb-40 font-['Inter',sans-serif]">
      <SharedGradients />
      <main className="min-w-[1150px] overflow-hidden rounded-t-[10px] bg-[#e6e6e6] shadow-[0_0_2px_rgba(0,0,0,0.5),0_45px_70px_rgba(0,0,0,0.5)]">
        <header className="border-t border-[#f6f6f6] bg-linear-to-b from-[#ebebeb] to-[#d1d1d1]">
          <TitleBar />
          <Toolbar />
        </header>
        <RibbonTabs />
        <Ribbon />
        <FormulaBar />
        <div className="h-1 bg-linear-to-b from-[#f4f4f4] to-[#d5d5d5]" />
        <div className="flex h-[286px] border-y-2 border-[#929292]">
          <Grid />
          <VerticalScroll />
        </div>
        <div className="flex bg-white">
          <ViewSwitch />
          <div className="min-w-0 flex-1">
            <SheetBar />
            <StatusBar />
          </div>
        </div>
      </main>
    </div>
  );
}
